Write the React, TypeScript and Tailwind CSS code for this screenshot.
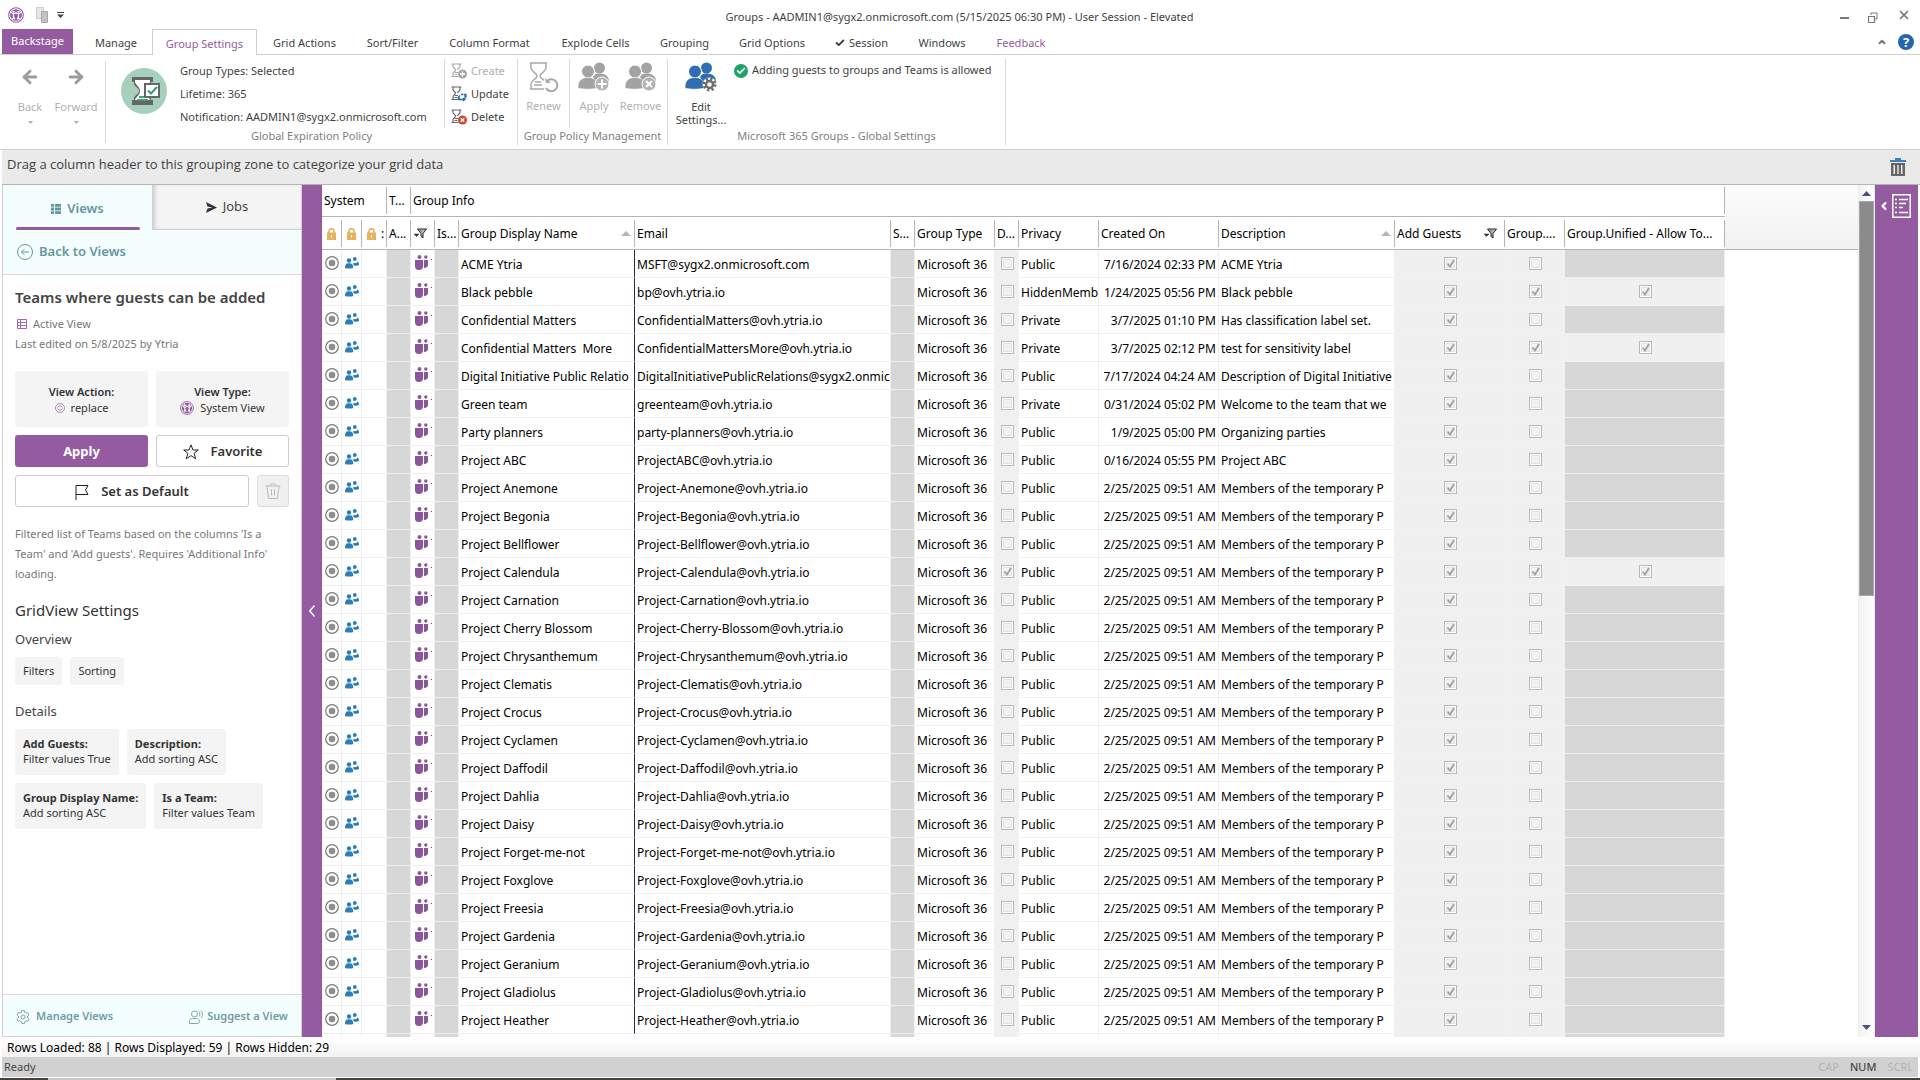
import { ArrowLeft, ArrowRight, Check, ChevronLeft, ChevronUp, X } from 'lucide-react';
import type { ReactNode } from 'react';

type Tab = { name: string; width: string; active?: boolean; checked?: boolean; color?: string };

const tabs: Tab[] = [
    { name: "Manage", width: "w-[72px]" },
    { name: "Group Settings", width: "w-[105px]", active: true },
    { name: "Grid Actions", width: "w-[95px]" },
    { name: "Sort/Filter", width: "w-[81px]" },
    { name: "Column Format", width: "w-[113px]" },
    { name: "Explode Cells", width: "w-[99px]" },
    { name: "Grouping", width: "w-[79px]" },
    { name: "Grid Options", width: "w-[96px]" },
    { name: "Session", width: "w-[83px]", checked: true },
    { name: "Windows", width: "w-[78px]" },
    { name: "Feedback", width: "w-[80px]", color: "text-[#955ba1]" },
];

const members = "Members of the temporary P";
const feb = "2/25/2025 09:51 AM";

type Row = { name: string; email: string; privacy: string; created: string; description: string; dynamic?: boolean; group?: boolean };

const project = (name: string, extra: Partial<Row> = {}): Row => ({
    name: `Project ${name}`,
    email: `Project-${name.replace(' ', '-')}@ovh.ytria.io`,
    privacy: "Public",
    created: feb,
    description: members,
    ...extra,
});

const rows: Row[] = [
    { name: "ACME Ytria", email: "MSFT@sygx2.onmicrosoft.com", privacy: "Public", created: "7/16/2024 02:33 PM", description: "ACME Ytria" },
    { name: "Black pebble", email: "bp@ovh.ytria.io", privacy: "HiddenMemb", created: "1/24/2025 05:56 PM", description: "Black pebble", group: true },
    { name: "Confidential Matters", email: "ConfidentialMatters@ovh.ytria.io", privacy: "Private", created: "3/7/2025 01:10 PM", description: "Has classification label set." },
    { name: "Confidential Matters  More", email: "ConfidentialMattersMore@ovh.ytria.io", privacy: "Private", created: "3/7/2025 02:12 PM", description: "test for sensitivity label", group: true },
    { name: "Digital Initiative Public Relatio", email: "DigitalInitiativePublicRelations@sygx2.onmic", privacy: "Public", created: "7/17/2024 04:24 AM", description: "Description of Digital Initiative" },
    { name: "Green team", email: "greenteam@ovh.ytria.io", privacy: "Private", created: "0/31/2024 05:02 PM", description: "Welcome to the team that we" },
    { name: "Party planners", email: "party-planners@ovh.ytria.io", privacy: "Public", created: "1/9/2025 05:00 PM", description: "Organizing parties" },
    { name: "Project ABC", email: "ProjectABC@ovh.ytria.io", privacy: "Public", created: "0/16/2024 05:55 PM", description: "Project ABC" },
    project("Anemone"),
    project("Begonia"),
    project("Bellflower"),
    project("Calendula", { dynamic: true, group: true }),
    project("Carnation"),
    project("Cherry Blossom"),
    project("Chrysanthemum"),
    project("Clematis"),
    project("Crocus"),
    project("Cyclamen"),
    project("Daffodil"),
    project("Dahlia"),
    project("Daisy"),
    project("Forget-me-not"),
    project("Foxglove"),
    project("Freesia"),
    project("Gardenia"),
    project("Geranium"),
    project("Gladiolus"),
    project("Heather"),
];

function YtriaLogo({ className }: { className: string }) {
    return (
        <svg viewBox="0 0 18 18" className={className} fill="none">
            <circle cx="9" cy="9" r="8.2" stroke="#955ba1" strokeWidth="1.2" />
            <circle cx="9" cy="9" r="6.6" fill="#955ba1" />
            <circle cx="6.1" cy="5.4" r="1.3" fill="#fff" />
            <circle cx="11.9" cy="5.4" r="1.3" fill="#fff" />
            <path d="M3.2 5.6 5 7.6h2.3L9 6.2l1.7 1.4H13l1.8-2M6.2 7.8v3.4L4.9 14M6.4 11l1.3 3M11.8 7.8v3.4l1.3 2.8M11.6 11l-1.3 3" stroke="#fff" strokeWidth="1.3" />
        </svg>
    );
}

function HourglassAction({ kind, className }: { kind: 'create' | 'update' | 'delete'; className: string }) {
    return (
        <svg viewBox="0 0 16 16" className={className} fill="none">
            <path d="M.5 1h10M.5 13.5h7M2 1v2.5C2 5 4.500 5.500 4.500 7S2 9 2 11v2.500M9 1v2.500C9 5 6.500 5.500 6.500 7M4 9.500h3M3.500 11.500h3" stroke={kind === 'create' ? '#a6a6a6' : '#666'} strokeWidth="1.2" />
            {kind === 'update' ? (
                <path d="M9 9.500 7.500 11 9 12.500M7.500 11v2.500H11M14 9v4.500h-2.500M12.500 8.500h2.500v3M13 12l-1.500 1.500L13 15M10 8.500h2" stroke="#2f6eb5" strokeWidth="1.3" />
            ) : (
                <>
                    <circle cx="11.500" cy="11" r="4.500" fill={kind === 'delete' ? '#d0462f' : '#a6a6a6'} />
                    {kind === 'delete'
                        ? <path d="m9.700 9.200 3.600 3.600M13.300 9.200l-3.600 3.600" stroke="#fff" strokeWidth="1.300" />
                        : <path d="M11.500 8.500v5M9 11h5" stroke="#fff" strokeWidth="1.300" />}
                </>
            )}
        </svg>
    );
}

function People({ badge, className }: { badge: 'plus' | 'x' | 'gear'; className: string }) {
    const color = badge === 'gear' ? '#2f6eb5' : '#a3a3a3';
    return (
        <svg viewBox="0 0 32 30" className={className}>
            <circle cx="21.500" cy="6" r="5.500" fill={color} />
            <path d="M15 15c1-2.500 3-3.500 6.500-3.500 6.500 0 9.500 3 9.500 8.500v2H19z" fill={color} />
            <circle cx="10" cy="9.500" r="6.500" fill={color} stroke="#fff" />
            <path d="M0 26c0-7 3-10.500 10-10.500S19.500 19 19.500 26c-5 1.500-15 1.500-19.500 0z" fill={color} stroke="#fff" strokeWidth=".5" />
            {badge === 'gear' ? (
                <>
                    <circle cx="24.500" cy="22.500" r="7" fill="#fff" />
                    <circle cx="24.500" cy="22.500" r="5.500" fill="none" stroke="#6b6b6b" strokeWidth="3" strokeDasharray="2.160 2.160" />
                    <circle cx="24.500" cy="22.500" r="3.500" fill="none" stroke="#6b6b6b" strokeWidth="2.400" />
                </>
            ) : (
                <>
                    <circle cx="24" cy="22" r="7" fill="#b3b3b3" stroke="#fff" />
                    <path d={badge === 'plus' ? "M24 17.500v9M19.500 22h9" : "m21 19 6 6M27 19l-6 6"} stroke="#fff" strokeWidth="2" />
                </>
            )}
        </svg>
    );
}

function LockIcon() {
    return (
        <svg viewBox="0 0 9 12" className="h-3 w-[9px] shrink-0">
            <path d="M2 5V3a2.500 2.300 0 0 1 5 0v2" fill="none" stroke="#e5b25d" strokeWidth="1.600" />
            <path d="M0 4.500h9V12H0z" fill="#e5b25d" />
            <path d="M4 7h1v2.500H4z" fill="#fff" />
        </svg>
    );
}

function FilterIcon() {
    return (
        <svg viewBox="0 0 13 11" className="h-[11px] w-[13px] shrink-0">
            <path d="M3.500 1h9L9 5.500V10L7 8.500v-3z" fill="#bbb" stroke="#222" />
            <path d="M0 6h5L2.500 8.500zM5 3h3" fill="#333" stroke="#444" strokeWidth=".6" />
        </svg>
    );
}

function RadioIcon() {
    return (
        <svg viewBox="0 0 14 14" className="size-[14px] shrink-0">
            <circle cx="7" cy="7" r="6.300" fill="none" stroke="#7a7a7a" strokeWidth="1.200" />
            <circle cx="7" cy="7" r="3.300" fill="#8c8c8c" />
        </svg>
    );
}

function GroupIcon() {
    return (
        <svg viewBox="0 0 14 12" className="h-3 w-[14px] shrink-0" fill="#2a7fba">
            <circle cx="9.800" cy="2" r="1.900" />
            <path d="M7.500 6.200c1 .6 1.500.2 2.300-.4.800.6 2 .4 2.700-1.200 1 .4 1.400 1.400 1.500 3.400-1.500.8-3.500.8-5 .4z" />
            <circle cx="4" cy="3.500" r="2.200" />
            <path d="M0 11c0-3.500 1-4.800 4-4.800S8.200 7.500 8.200 11c-2 .8-6.200.8-8.200 0z" />
        </svg>
    );
}

function TeamsIcon() {
    return (
        <svg viewBox="0 0 13 15" className="h-[15px] w-[13px] shrink-0" fill="#8a559c">
            <circle cx="4.500" cy="2" r="2" />
            <circle cx="10.800" cy="2" r="1.700" />
            <path d="M0 5h8v6.500C8 14 6.300 15 4 15s-4-1-4-3.500zM9 5h4v5c0 2-1.500 3-4 3z" />
        </svg>
    );
}

function CheckCell({ checked, label }: { checked?: boolean; label: string }) {
    return (
        <div className="grid h-[27px] place-items-center pl-[2px]">
            <input
                type="checkbox"
                checked={!!checked}
                disabled
                readOnly
                aria-label={label}
                className="col-start-1 row-start-1 size-[13px] appearance-none border border-[#b9b9b9] bg-[#f2f2f2] shadow-[inset_0_0_0_1px_#fff,inset_0_0_0_2px_#e2e2e2]"
            />
            {checked && (
                <svg viewBox="0 0 9 9" className="col-start-1 row-start-1 size-[9px]">
                    <path d="M1.500 4.500 4 7.500 8 1" fill="none" stroke="#a0a0a0" strokeWidth="1.800" />
                </svg>
            )}
        </div>
    );
}

function RibbonLabel({ children }: { children: ReactNode }) {
    return <div className="text-center text-[11px] leading-4 text-[#808080]">{children}</div>;
}

function Ribbon() {
    return (
        <div className="flex h-[95px] shrink-0 border-b border-[#cfcfcf] pl-[2px] text-[11px] text-[#3f3f3f]">
            <div className="my-[6px] flex w-[104px] border-r border-[#dadada] pl-[5px] text-[#b0b0b0]">
                {["Back", "Forward"].map((name) => (
                    <button key={name} type="button" disabled className="flex w-[46px] flex-col items-center pt-[6px]">
                        {name === "Back"
                            ? <ArrowLeft className="size-5 text-[#9c9c9c]" strokeWidth={3.5} />
                            : <ArrowRight className="size-5 text-[#9c9c9c]" strokeWidth={3.5} />}
                        <span className="mt-[10px] leading-5">{name}</span>
                        <svg viewBox="0 0 5 3" className="mt-1 h-[3px] w-[5px]"><path d="M0 0h5L2.500 3z" fill="#b0b0b0" /></svg>
                    </button>
                ))}
            </div>

            <div className="my-1 flex w-[411px] flex-col">
                <div className="flex h-[69px]">
                    <div className="flex flex-1 border-r border-[#dadada] pl-[15px]">
                        <div className="mt-[9px] grid size-[46px] place-items-center rounded-full bg-[#a6d0bd]">
                            <svg viewBox="0 0 28 28" className="ml-1 size-7" fill="none">
                                <path d="M0 0h21v5h-2v2c-1 3-5 4-5 7s4 4 5 7v2h2v5H0v-5h2v-2c1-3 5-4 5-7s-4-4-5-7V5H0z" fill="#666" />
                                <path d="M3 3h15v2c-1 3.500-5 5-5 9s4 5.500 5 9H3c1-3.500 5-5 5-9S4 8.500 3 5z" fill="#fff" />
                                <path d="M7 20h8M5 23h11" stroke="#3aa37d" strokeWidth="2" />
                                <path d="M13 7h14v13H13z" fill="#fff" stroke="#666" strokeWidth="2" />
                                <path d="m16 13.500 3 3 6-6.500" stroke="#2aa07a" strokeWidth="2" />
                            </svg>
                        </div>
                        <div className="ml-[13px] flex flex-col whitespace-nowrap leading-[23px]">
                            <span>Group Types: Selected</span>
                            <span>Lifetime: 365</span>
                            <span>Notification: AADMIN1@sygx2.onmicrosoft.com</span>
                        </div>
                    </div>
                    <div className="flex w-[72px] flex-col pl-[6px] leading-[23px]">
                        <button type="button" disabled className="flex items-center gap-1 text-[#b0b0b0]"><HourglassAction kind="create" className="size-4" />Create</button>
                        <button type="button" className="flex items-center gap-1"><HourglassAction kind="update" className="size-4" />Update</button>
                        <button type="button" className="flex items-center gap-1"><HourglassAction kind="delete" className="size-4" />Delete</button>
                    </div>
                </div>
                <RibbonLabel>Global Expiration Policy</RibbonLabel>
            </div>

            <div className="my-1 flex w-[151px] flex-col border-x border-[#dadada]">
                <div className="flex h-[69px] text-[#b0b0b0]">
                    <button type="button" disabled className="flex w-[52px] flex-col items-center border-r border-[#dadada] pt-[3px]">
                        <svg viewBox="0 0 30 30" className="size-[30px]" fill="none" stroke="#a8a8a8">
                            <path d="M1 1h17M1 27h14M2 1v5c0 4 6 4.500 6 8s-6 4-6 8v5M17 1v5c0 4-6 4.500-6 8 0 2 3 3 4 4.500M6 20h6M5 23h8" strokeWidth="1.500" />
                            <path d="M18 19a6 6 0 1 1-1 7" strokeWidth="2" />
                            <path d="m16 16 1 5h5z" fill="#a8a8a8" stroke="none" />
                        </svg>
                        <span className="mt-1 leading-5">Renew</span>
                    </button>
                    <button type="button" disabled className="flex w-[48px] flex-col items-center pt-[3px]">
                        <People badge="plus" className="h-[30px] w-8" />
                        <span className="mt-1 leading-5">Apply</span>
                    </button>
                    <button type="button" disabled className="flex w-[45px] flex-col items-center pt-[3px]">
                        <People badge="x" className="h-[30px] w-8" />
                        <span className="mt-1 leading-5">Remove</span>
                    </button>
                </div>
                <RibbonLabel>Group Policy Management</RibbonLabel>
            </div>

            <div className="my-1 flex w-[338px] flex-col border-r border-[#dadada]">
                <div className="flex h-[69px]">
                    <button type="button" className="flex w-[66px] flex-col items-center pt-[3px]">
                        <People badge="gear" className="h-[30px] w-8" />
                        <span className="mt-2 leading-[13px]">Edit<br />Settings...</span>
                    </button>
                    <div className="flex h-[23px] items-center gap-1 whitespace-nowrap">
                        <span className="grid size-[14px] place-items-center rounded-full bg-[#21a06c]">
                            <Check className="size-[10px] text-white" strokeWidth={4} />
                        </span>
                        Adding guests to groups and Teams is allowed
                    </div>
                </div>
                <RibbonLabel>Microsoft 365 Groups - Global Settings</RibbonLabel>
            </div>
        </div>
    );
}

function ViewsPanel() {
    return (
        <aside className="flex w-[300px] shrink-0 flex-col border border-t-0 border-[#d2d2d2] text-[11px] text-[#333]">
            <div className="flex h-[45px] shrink-0">
                <button type="button" className="flex w-[149px] flex-col items-center bg-[#f4feff] text-[13px] font-semibold text-[#6696a0]">
                    <span className="flex h-[42px] items-center gap-1.5 pt-[6px]">
                        <svg viewBox="0 0 10 10" className="size-[10px]" fill="currentColor">
                            <path d="M0 0h3v2.800H0zM4 0h6v2.800H4zM0 3.600h3v2.800H0zM4 3.600h6v2.800H4zM0 7.200h3V10H0zM4 7.200h6V10H4z" />
                        </svg>
                        Views
                    </span>
                    <span className="h-[3px] w-[124px] rounded-sm bg-[#955ba1]" />
                </button>
                <button type="button" className="flex flex-1 items-center justify-center gap-1.5 border-b border-l border-[#d2d2d2] bg-[#f4f4f4] text-[13px] text-[#444] shadow-[inset_4px_0_4px_-2px_#ccc]">
                    <svg viewBox="0 0 11 11" className="size-[11px]"><path d="m0 0 11 5.500L0 11l1.500-4.500 5-1-5-1z" fill="#333" /></svg>
                    Jobs
                </button>
            </div>
            <a href="#views" className="flex h-[45px] shrink-0 items-center gap-1.5 border-b border-[#d9d9d9] bg-[#f4feff] pl-[14px] text-[13px] font-semibold text-[#6696a0]">
                <svg viewBox="0 0 16 16" className="size-4" fill="none" stroke="currentColor">
                    <circle cx="8" cy="8" r="7.500" />
                    <path d="M12 8H4.500m3-3-3 3 3 3" />
                </svg>
                Back to Views
            </a>

            <div className="flex flex-1 flex-col overflow-hidden px-3 pt-3">
                <h2 className="text-[15px] font-semibold leading-5 text-[#444]">Teams where guests can be added</h2>
                <div className="mt-[7px] flex h-5 items-center gap-1.5 pl-[2px] text-[#777]">
                    <svg viewBox="0 0 10 10" className="size-[10px]" fill="none" stroke="#955ba1" strokeWidth=".9">
                        <path d="M.5.5h9v9h-9zM3.500.5v9M.5 3.500h9M.5 6.500h9" />
                    </svg>
                    Active View
                </div>
                <p className="leading-5 text-[#777]">Last edited on 5/8/2025 by Ytria</p>

                <div className="mt-[17px] grid grid-cols-2 gap-2">
                    <div className="flex h-14 flex-col items-center justify-center rounded-[3px] bg-[#f4f4f4] pt-[2px] leading-4">
                        <span className="font-semibold">View Action:</span>
                        <span className="flex items-center gap-1.5">
                            <svg viewBox="0 0 10 10" className="size-[10px]" fill="none" stroke="#955ba1" strokeWidth=".7">
                                <circle cx="5" cy="5" r="4.500" />
                                <path d="M2.500 4.500c1-2 4-2 5-.5M7.500 5.500c-1 2-4 2-5 .5" />
                            </svg>
                            replace
                        </span>
                    </div>
                    <div className="flex h-14 flex-col items-center justify-center rounded-[3px] bg-[#f4f4f4] pt-[2px] leading-4">
                        <span className="font-semibold">View Type:</span>
                        <span className="flex items-center gap-1.5"><YtriaLogo className="size-[14px]" />System View</span>
                    </div>
                    <button type="button" className="h-8 rounded-[3px] bg-[#955ba1] pt-px text-[13px] font-bold text-white">Apply</button>
                    <button type="button" className="flex h-8 items-center justify-center gap-3 rounded-[3px] border border-[#ccc] pt-px text-[13px] font-semibold">
                        <svg viewBox="0 0 16 16" className="size-4" fill="none" stroke="#222">
                            <path d="m8 .8 2 5.200h5.300l-4.200 3.300 1.600 5.500L8 11.600l-4.700 3.200 1.600-5.500L.7 6H6z" />
                        </svg>
                        Favorite
                    </button>
                </div>
                <div className="mt-2 flex gap-2">
                    <button type="button" className="flex h-8 flex-1 items-center justify-center gap-3 rounded-[3px] border border-[#ccc] pt-px text-[13px] font-semibold">
                        <svg viewBox="0 0 14 16" className="h-4 w-[14px]" fill="none" stroke="#222">
                            <path d="M1 16V1.500h12L10.500 6l2.500 4.500H1" />
                        </svg>
                        Set as Default
                    </button>
                    <button type="button" disabled aria-label="Delete view" className="grid size-8 place-items-center rounded-[3px] border border-[#ddd] bg-[#f0f0f0]">
                        <svg viewBox="0 0 16 16" className="size-4" fill="none" stroke="#bbb">
                            <path d="M.5 3h15M5 3c0-3 6-3 6 0M2 3l1.500 12.500h9L14 3M6.500 6v6.500M9.500 6v6.500" />
                        </svg>
                    </button>
                </div>

                <p className="mt-[17px] leading-5 text-[#777]">
                    Filtered list of Teams based on the columns 'Is a Team' and 'Add guests'. Requires 'Additional Info' loading.
                </p>
                <h3 className="mt-4 text-[15px] leading-5">GridView Settings</h3>
                <h4 className="mt-[9px] text-[13px] leading-5 text-[#444]">Overview</h4>
                <div className="mt-2 flex gap-2">
                    <button type="button" className="h-7 rounded-[3px] bg-[#f4f4f4] px-2">Filters</button>
                    <button type="button" className="h-7 rounded-[3px] bg-[#f4f4f4] px-2">Sorting</button>
                </div>
                <h4 className="mt-4 text-[13px] leading-5 text-[#444]">Details</h4>
                <div className="mt-2 flex flex-wrap gap-2">
                    {[
                        ["Add Guests:", "Filter values True"],
                        ["Description:", "Add sorting ASC"],
                        ["Group Display Name:", "Add sorting ASC"],
                        ["Is a Team:", "Filter values Team"],
                    ].map(([title, text]) => (
                        <div key={title} className="h-[46px] rounded-[3px] bg-[#f4f4f4] px-2 pt-[7px] leading-[15px]">
                            <div className="font-bold">{title}</div>
                            <div>{text}</div>
                        </div>
                    ))}
                </div>
            </div>

            <div className="flex h-[42px] shrink-0 items-center justify-between border-t border-[#d9d9d9] bg-[#f4feff] px-[13px] pt-[2px] font-semibold text-[#6f9aa5]">
                <button type="button" className="flex items-center gap-1.5">
                    <svg viewBox="0 0 14 14" className="size-[14px]" fill="none" stroke="currentColor" strokeWidth=".9">
                        <circle cx="7" cy="7" r="2" />
                        <path d="M5.700.6h2.600l.4 1.800 1.300.8 1.800-.6 1.200 2.200L11.600 6v2l1.400 1.200-1.200 2.200-1.800-.6-1.300.8-.4 1.800H5.700l-.4-1.800-1.300-.8-1.800.6L1 9.200 2.400 8V6L1 4.800l1.200-2.200 1.800.6 1.300-.8z" />
                    </svg>
                    Manage Views
                </button>
                <button type="button" className="flex items-center gap-1">
                    <svg viewBox="0 0 14 14" className="size-[14px]" fill="none" stroke="currentColor" strokeWidth=".9">
                        <circle cx="5.500" cy="4" r="3" />
                        <path d="M.5 13.500v-2c0-2 1.500-3 3-3h4c1.500 0 3 1 3 3 0 1.500-1 2-2 2zM10 1.500c1.200 1.500 1.200 3.500 0 5M12 .5c2 2.500 1.800 5.500 0 7.500" />
                    </svg>
                    Suggest a View
                </button>
            </div>
        </aside>
    );
}

function SortArrow() {
    return <svg viewBox="0 0 10 5" className="h-[5px] w-[10px] shrink-0"><path d="M0 5h10L5 0z" fill="#b5b5b5" /></svg>;
}

const columns: { key: string; width: string; label: ReactNode; icon?: ReactNode; pad?: string }[] = [
    { key: "select", width: "w-[20px]", label: <LockIcon />, pad: "pl-[5px]" },
    { key: "kind", width: "w-[20px]", label: <LockIcon />, pad: "pl-[5px]" },
    { key: "status", width: "w-[25px]", label: <><LockIcon /><span className="ml-[5px]">:</span></>, pad: "pl-[5px]" },
    { key: "a", width: "w-[24px]", label: "A..." },
    { key: "team", width: "w-[24px]", label: <FilterIcon />, pad: "pl-[3px]" },
    { key: "is", width: "w-[24px]", label: "Is..." },
    { key: "name", width: "w-[176px]", label: "Group Display Name", icon: <SortArrow /> },
    { key: "email", width: "w-[256px]", label: "Email" },
    { key: "s", width: "w-[24px]", label: "S..." },
    { key: "type", width: "w-[80px]", label: "Group Type" },
    { key: "d", width: "w-[24px]", label: "D..." },
    { key: "privacy", width: "w-[80px]", label: "Privacy" },
    { key: "created", width: "w-[120px]", label: "Created On" },
    { key: "description", width: "w-[176px]", label: "Description", icon: <SortArrow /> },
    { key: "guests", width: "w-[110px]", label: "Add Guests", icon: <FilterIcon /> },
    { key: "group", width: "w-[60px]", label: "Group...." },
    { key: "unified", width: "w-[160px]", label: "Group.Unified - Allow To..." },
];

const cell = "border-b border-r border-[#efefef] p-0";
const filled = "border-b border-r border-[#efefef] bg-[#d7d7d7] p-0";
const light = "border-b border-r border-[#f2f2f2] bg-[#f0f0f0] p-0";
const text = "h-[27px] overflow-hidden whitespace-pre pl-[2px] leading-[29px]";
const iconCell = "flex h-[27px] items-center pb-[2px]";
const groupHead = "h-[27px] border-r border-[#b5b5b5] pl-[2px] leading-[27px]";

function GroupGrid() {
    return (
        <div className="flex min-w-0 flex-1 items-start overflow-hidden">
            <table className="w-[1403px] shrink-0 table-fixed border-separate border-spacing-0 text-left text-[12px] text-black">
                <colgroup>
                    {columns.map((c) => <col key={c.key} className={c.width} />)}
                </colgroup>
                <thead>
                    <tr className="h-8">
                        <th colSpan={3} className="border-b border-[#b5b5b5] p-0 font-normal"><div className={groupHead}>System</div></th>
                        <th className="border-b border-[#b5b5b5] p-0 font-normal"><div className={groupHead}>T...</div></th>
                        <th colSpan={13} className="border-b border-[#b5b5b5] p-0 font-normal"><div className={groupHead}>Group Info</div></th>
                    </tr>
                    <tr className="h-[33px]">
                        {columns.map((c) => (
                            <th key={c.key} className="border-b border-[#b5b5b5] p-0 font-normal">
                                <div className={`flex h-[27px] items-center overflow-hidden whitespace-nowrap border-r border-[#b5b5b5] pt-px ${c.pad ?? 'pl-[2px]'}`}>
                                    {c.label}
                                    {c.icon && <span className={c.key === 'guests' ? 'ml-auto pr-[7px]' : 'ml-auto pr-[3px]'}>{c.icon}</span>}
                                </div>
                            </th>
                        ))}
                    </tr>
                </thead>
                <tbody>
                    {rows.map((r) => (
                        <tr key={r.name} className="h-7">
                            <td className={cell}><div className={`${iconCell} justify-center`}><RadioIcon /></div></td>
                            <td className={cell}><div className={`${iconCell} justify-center`}><GroupIcon /></div></td>
                            <td className={cell} />
                            <td className={filled} />
                            <td className={cell}>
                                <div className={`${iconCell} gap-[3px] pl-1`}><TeamsIcon /><span className="mb-[6px] size-px bg-[#a33]" /></div>
                            </td>
                            <td className={filled} />
                            <td className="border-b border-r border-b-[#efefef] border-r-[#1d2c4c] p-0"><div className={text}>{r.name}</div></td>
                            <td className={cell}><div className={text}>{r.email}</div></td>
                            <td className={filled} />
                            <td className={cell}><div className={text}>Microsoft 36</div></td>
                            <td className={light}><CheckCell checked={r.dynamic} label="Dynamic membership" /></td>
                            <td className={cell}><div className={text}>{r.privacy}</div></td>
                            <td className={cell}><div className={`${text} pr-[2px] text-right`}>{r.created}</div></td>
                            <td className={cell}><div className={text}>{r.description}</div></td>
                            <td className={light}><CheckCell checked label="Add guests" /></td>
                            <td className={light}><CheckCell checked={r.group} label="Group setting" /></td>
                            <td className={r.group ? light : filled}>{r.group && <CheckCell checked label="Allow to add guests" />}</td>
                        </tr>
                    ))}
                    <tr className="h-7">
                        {columns.map((c) => (
                            <td key={c.key} className={['a', 'is', 's', 'unified'].includes(c.key) ? filled : ['d', 'guests', 'group'].includes(c.key) ? light : cell} />
                        ))}
                    </tr>
                </tbody>
            </table>
            <div className="h-[65px] flex-1 border-b border-[#b5b5b5] bg-linear-to-b from-[#fcfcfc] to-[#f1f1f1]" />
        </div>
    );
}

export default function App() {
    return (
        <div className="flex h-screen min-w-[1200px] flex-col overflow-hidden bg-white font-['Noto_Sans','Open_Sans',sans-serif] text-[#3f3f3f]">
            <header className="flex h-[29px] shrink-0 items-center pl-2 pr-[9px]">
                <div className="flex flex-1 items-center">
                    <YtriaLogo className="size-4" />
                    <svg viewBox="0 0 12 16" className="ml-3 h-4 w-3"><path d="M.5.5h7v11h-7z" fill="#e6e6e6" stroke="#ccc" /><path d="M5.500 4.500h6v11h-6z" fill="#c2c2c2" stroke="#aaa" /></svg>
                    <svg viewBox="0 0 7 6" className="ml-[9px] h-[6px] w-[7px]"><path d="M0 0h7v1H0zM0 2.500h7L3.500 6z" fill="#444" /></svg>
                </div>
                <h1 className="pt-[6px] text-[11px]">Groups - AADMIN1@sygx2.onmicrosoft.com (5/15/2025 06:30 PM) - User Session - Elevated</h1>
                <div className="flex flex-1 items-center justify-end gap-[19px] pt-px text-[#777]">
                    <button type="button" aria-label="Minimize" className="mt-[6px] h-[2px] w-[9px] bg-[#777]" />
                    <button type="button" aria-label="Restore">
                        <svg viewBox="0 0 10 11" className="mt-1 h-[11px] w-[10px]" fill="none" stroke="#777"><path d="M3 3V1h6v6H7" /><path d="M.5 4.500h6v6h-6z" fill="#fff" strokeWidth="1.200" /></svg>
                    </button>
                    <button type="button" aria-label="Close"><X className="size-[14px]" strokeWidth={3} /></button>
                </div>
            </header>

            <nav className="flex h-[26px] shrink-0 items-stretch border-b border-[#cfcfcf] pl-[2px] pr-[6px] text-[11px]">
                <button type="button" className="mr-[7px] w-[71px] bg-[#955ba1] text-white">Backstage</button>
                {tabs.map((tab) => (
                    <button
                        key={tab.name}
                        type="button"
                        className={`${tab.width} ${tab.active ? '-mb-px border border-b-0 border-[#cfcfcf] bg-white text-[#955ba1]' : tab.color ?? ''} flex items-center justify-center gap-1 whitespace-nowrap pt-[3px]`}
                    >
                        {tab.checked && <Check className="size-[10px]" strokeWidth={4.5} />}
                        {tab.name}
                    </button>
                ))}
                <div className="ml-auto flex items-center gap-[11px]">
                    <button type="button" aria-label="Collapse ribbon"><ChevronUp className="size-[10px] text-[#777]" strokeWidth={5} /></button>
                    <button type="button" aria-label="Help" className="size-4 rounded-full bg-[#2566ae] text-[13px] font-bold leading-4 text-white">?</button>
                </div>
            </nav>

            <Ribbon />

            <div className="ml-[2px] flex h-[35px] shrink-0 items-center justify-between border-b border-[#b5b5b5] bg-[#eaeaea] pl-[5px] pr-[14px] font-['Open_Sans','Noto_Sans',sans-serif] text-[13px]">
                <span className="pb-1">Drag a column header to this grouping zone to categorize your grid data</span>
                <button type="button" aria-label="Clear grouping">
                    <svg viewBox="0 0 16 18" className="h-[18px] w-4"><path d="M0 2h5V0h6v2h5v2H0z" fill="#3c80bd" /><path d="M1 5h14v13H1zM3.500 7v9H5V7zM7.300 7v9h1.400V7zM11 7v9h1.500V7z" fill="#666" fillRule="evenodd" /></svg>
                </button>
            </div>

            <main className="flex min-h-0 flex-1 pl-[2px] pr-[2px]">
                <ViewsPanel />
                <button type="button" aria-label="Collapse panel" className="grid w-5 shrink-0 place-items-center bg-[#955ba1] text-white">
                    <svg viewBox="0 0 6 12" className="h-3 w-[6px]" fill="none" stroke="#fff" strokeWidth="1.500"><path d="M5.500.5.8 6l4.700 5.500" /></svg>
                </button>
                <GroupGrid />
                <div className="flex w-[17px] shrink-0 flex-col items-center border-x border-[#ececec] bg-linear-to-r from-[#f2f2f2] to-white">
                    <button type="button" aria-label="Scroll up" className="grid h-4 w-full place-items-center"><svg viewBox="0 0 9 5" className="h-[5px] w-[9px]"><path d="M0 5h9L4.500 0z" fill="#46557c" /></svg></button>
                    <div className="h-[395px] w-[15px] border border-[#a3a8ab] bg-[#8b8b8b]" />
                    <button type="button" aria-label="Scroll down" className="mt-auto grid h-5 w-full place-items-center"><svg viewBox="0 0 9 5" className="h-[5px] w-[9px]"><path d="M0 0h9L4.500 5z" fill="#46557c" /></svg></button>
                </div>
                <div className="flex w-[43px] shrink-0 items-start bg-[#955ba1] pl-[3px] pt-[9px]">
                    <button type="button" aria-label="Open details" className="flex items-center gap-[2px] text-white">
                        <ChevronLeft className="size-3" strokeWidth={4.5} />
                        <svg viewBox="0 0 19 24" className="h-6 w-[19px]" fill="none" stroke="#fff">
                            <path d="M.8.8h17.400v22.400H.8z" strokeWidth="1.500" />
                            <path d="M3 5.500h2M7 5.500h9M3 9.500h2M7 9.500h7M3 13.500h2M7 13.500h4M3 18.500h2M7 18.500h9" strokeWidth="1.500" />
                        </svg>
                    </button>
                </div>
            </main>

            <div className="ml-[2px] h-5 shrink-0 bg-linear-to-b from-white to-[#f2f2f2] pl-[5px] pt-px text-[12px] leading-5 text-black">
                Rows Loaded: 88 | Rows Displayed: 59 | Rows Hidden: 29
            </div>
            <footer className="mx-[2px] flex h-5 shrink-0 items-center bg-[#d1d1d1] pl-[2px] pr-[5px] pt-px text-[11px] text-[#444]">
                <span>Ready</span>
                <div className="ml-auto flex gap-[11px] text-[#b3b3b3]">
                    <span>CAP</span>
                    <span className="text-[#333]">NUM</span>
                    <span>SCRL</span>
                </div>
            </footer>
            <div className="mt-px h-[2px] shrink-0 bg-[#45423f] pl-12">
                <div className="h-[2px] w-[288px] bg-[#c9c9c9]" />
            </div>
        </div>
    );
}
